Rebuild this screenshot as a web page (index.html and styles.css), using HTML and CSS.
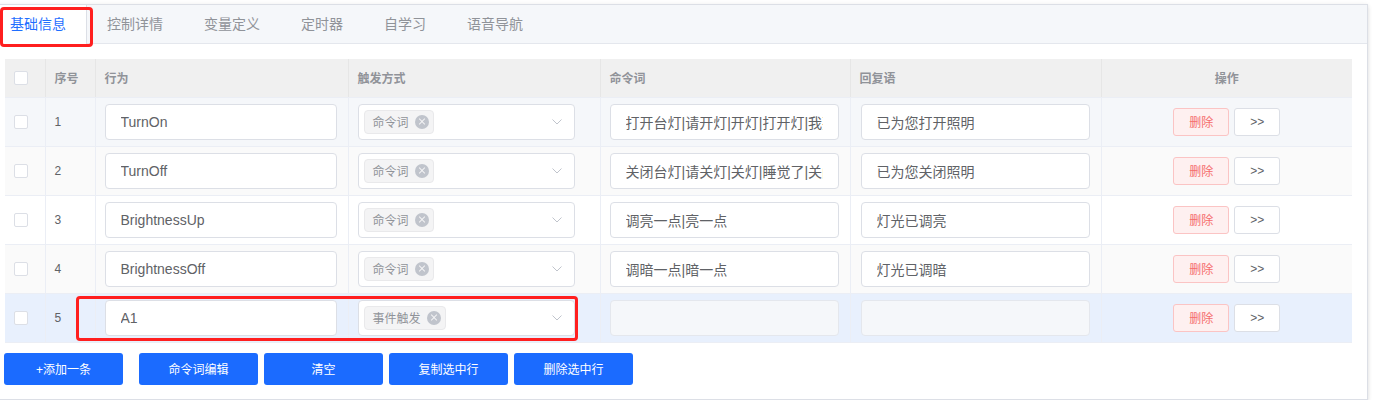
FILE: index.html
```html
<!DOCTYPE html>
<html lang="zh-CN">
<head>
    <meta charset="UTF-8">
    <meta name="viewport" content="width=device-width, initial-scale=1.0">
    <title>基础信息</title>
    <link rel="stylesheet" href="styles.css">
</head>
<body>
    <div class="card">
        <div class="tabs">
            <div class="tab active">基础信息</div>
            <div class="tab">控制详情</div>
            <div class="tab">变量定义</div>
            <div class="tab">定时器</div>
            <div class="tab">自学习</div>
            <div class="tab">语音导航</div>
        </div>

        <div class="pane">
            <div class="table-wrap">
                <table class="grid">
                    <colgroup>
                        <col style="width: 40px">
                        <col style="width: 50px">
                        <col style="width: 253px">
                        <col style="width: 252px">
                        <col style="width: 250px">
                        <col style="width: 251px">
                        <col style="width: 251px">
                    </colgroup>
                    <thead>
                        <tr>
                            <th><span class="check"></span></th>
                            <th>序号</th>
                            <th>行为</th>
                            <th>触发方式</th>
                            <th>命令词</th>
                            <th>回复语</th>
                            <th class="center">操作</th>
                        </tr>
                    </thead>
                    <tbody>
                        <tr class="row-hover">
                            <td><span class="check"></span></td>
                            <td class="num">1</td>
                            <td><input class="field w-action" value="TurnOn"></td>
                            <td>
                                <div class="select">
                                    <span class="tag">命令词<i class="tag-close"></i></span>
                                    <svg class="arrow" width="10" height="6" viewBox="0 0 10 6"><path d="M0.5 0.5 L5 5 L9.5 0.5" fill="none" stroke="#c0c4cc" stroke-width="1"/></svg>
                                </div>
                            </td>
                            <td><input class="field w-cmd" value="打开台灯|请开灯|开灯|打开灯|我要开灯"></td>
                            <td><input class="field w-reply" value="已为您打开照明"></td>
                            <td class="center">
                                <div class="ops"><button class="btn-del">删除</button><button class="btn-more">&gt;&gt;</button></div>
                            </td>
                        </tr>
                        <tr class="row-stripe">
                            <td><span class="check"></span></td>
                            <td class="num">2</td>
                            <td><input class="field w-action" value="TurnOff"></td>
                            <td>
                                <div class="select">
                                    <span class="tag">命令词<i class="tag-close"></i></span>
                                    <svg class="arrow" width="10" height="6" viewBox="0 0 10 6"><path d="M0.5 0.5 L5 5 L9.5 0.5" fill="none" stroke="#c0c4cc" stroke-width="1"/></svg>
                                </div>
                            </td>
                            <td><input class="field w-cmd" value="关闭台灯|请关灯|关灯|睡觉了|关闭灯"></td>
                            <td><input class="field w-reply" value="已为您关闭照明"></td>
                            <td class="center">
                                <div class="ops"><button class="btn-del">删除</button><button class="btn-more">&gt;&gt;</button></div>
                            </td>
                        </tr>
                        <tr>
                            <td><span class="check"></span></td>
                            <td class="num">3</td>
                            <td><input class="field w-action" value="BrightnessUp"></td>
                            <td>
                                <div class="select">
                                    <span class="tag">命令词<i class="tag-close"></i></span>
                                    <svg class="arrow" width="10" height="6" viewBox="0 0 10 6"><path d="M0.5 0.5 L5 5 L9.5 0.5" fill="none" stroke="#c0c4cc" stroke-width="1"/></svg>
                                </div>
                            </td>
                            <td><input class="field w-cmd" value="调亮一点|亮一点"></td>
                            <td><input class="field w-reply" value="灯光已调亮"></td>
                            <td class="center">
                                <div class="ops"><button class="btn-del">删除</button><button class="btn-more">&gt;&gt;</button></div>
                            </td>
                        </tr>
                        <tr class="row-stripe">
                            <td><span class="check"></span></td>
                            <td class="num">4</td>
                            <td><input class="field w-action" value="BrightnessOff"></td>
                            <td>
                                <div class="select">
                                    <span class="tag">命令词<i class="tag-close"></i></span>
                                    <svg class="arrow" width="10" height="6" viewBox="0 0 10 6"><path d="M0.5 0.5 L5 5 L9.5 0.5" fill="none" stroke="#c0c4cc" stroke-width="1"/></svg>
                                </div>
                            </td>
                            <td><input class="field w-cmd" value="调暗一点|暗一点"></td>
                            <td><input class="field w-reply" value="灯光已调暗"></td>
                            <td class="center">
                                <div class="ops"><button class="btn-del">删除</button><button class="btn-more">&gt;&gt;</button></div>
                            </td>
                        </tr>
                        <tr class="row-current">
                            <td><span class="check"></span></td>
                            <td class="num">5</td>
                            <td><input class="field w-action" value="A1"></td>
                            <td>
                                <div class="select">
                                    <span class="tag">事件触发<i class="tag-close"></i></span>
                                    <svg class="arrow" width="10" height="6" viewBox="0 0 10 6"><path d="M0.5 0.5 L5 5 L9.5 0.5" fill="none" stroke="#c0c4cc" stroke-width="1"/></svg>
                                </div>
                            </td>
                            <td><input class="field w-cmd" value="" disabled></td>
                            <td><input class="field w-reply" value="" disabled></td>
                            <td class="center">
                                <div class="ops"><button class="btn-del">删除</button><button class="btn-more">&gt;&gt;</button></div>
                            </td>
                        </tr>
                    </tbody>
                </table>
                <!-- annotation over row 5 -->
                <div class="mark mark-row"></div>
            </div>

            <div class="toolbar">
                <button class="btn-primary first">+添加一条</button>
                <button class="btn-primary">命令词编辑</button>
                <button class="btn-primary">清空</button>
                <button class="btn-primary">复制选中行</button>
                <button class="btn-primary">删除选中行</button>
            </div>
        </div>
    </div>

    <!-- annotation over the active tab -->
    <div class="mark mark-tab"></div>
</body>
</html>
```

FILE: styles.css
```css
/* General styles */
* {
    margin: 0;
    padding: 0;
    box-sizing: border-box;
}

body {
    font-family: "Liberation Sans", "Noto Sans CJK SC", sans-serif;
    background: #fff;
    color: #606266;
    padding-top: 4px;
    overflow: hidden;
}

/* Card with tabs */
.card {
    margin-left: -11px;
    width: 1379px;
    border: 1px solid #dcdfe6;
    background: #fff;
    box-shadow: 0 2px 4px 0 rgba(0, 0, 0, 0.12), 0 0 6px 0 rgba(0, 0, 0, 0.04);
}

.tabs {
    display: flex;
    height: 39px;
    background: #f5f7fa;
    border-bottom: 1px solid #e4e7ed;
}

.tab {
    height: 39px;
    line-height: 38px;
    padding: 0 20px;
    font-size: 14px;
    color: #909399;
    border-right: 1px solid transparent;
}

.tab.active {
    background: #fff;
    color: #1f6fff;
    border-right-color: #dcdfe6;
}

.pane {
    padding: 15px 15px 14px;
}

/* Table */
.table-wrap {
    position: relative;
}

.grid {
    width: 1347px;
    table-layout: fixed;
    border-collapse: collapse;
    font-size: 12px;
}

.grid th {
    height: 38px;
    padding: 0 0 0 9px;
    background: #f0f0f0;
    color: #909399;
    font-weight: bold;
    text-align: left;
    border-right: 1px solid #e6e6e6;
    border-bottom: 1px solid #ebeef5;
}

.grid td {
    height: 49px;
    padding: 0 0 0 9px;
    border-right: 1px solid #ebeef5;
    border-bottom: 1px solid #ebeef5;
}

.grid th:last-child,
.grid td:last-child {
    border-right: none;
}

.grid .center {
    text-align: center;
    padding-left: 0;
}

.grid .num {
    color: #606266;
}

.row-hover td {
    background: #f5f7fa;
}

.row-stripe td {
    background: #fafafa;
}

.row-current td {
    background: #e8f0fd;
}

.check {
    display: block;
    width: 14px;
    height: 14px;
    border: 1px solid #dcdfe6;
    border-radius: 2px;
    background: #fff;
}

/* Inputs */
.field {
    display: block;
    height: 36px;
    padding: 0 15px;
    border: 1px solid #dcdfe6;
    border-radius: 4px;
    background: #fff;
    font-family: "Liberation Sans", "Noto Sans CJK SC", sans-serif;
    font-size: 14px;
    color: #606266;
    outline: none;
}

.field:disabled {
    background: #f5f7fa;
    border-color: #e4e7ed;
}

.w-action {
    width: 232px;
}

.w-cmd {
    width: 229px;
}

.w-reply {
    width: 229px;
    margin-left: 1px;
}

.select {
    display: flex;
    align-items: center;
    justify-content: space-between;
    width: 217px;
    height: 36px;
    padding: 0 12px 0 5px;
    border: 1px solid #dcdfe6;
    border-radius: 4px;
    background: #fff;
}

.tag {
    display: flex;
    align-items: center;
    height: 24px;
    padding: 0 4px 0 8px;
    border: 1px solid #e9e9eb;
    border-radius: 4px;
    background: #f4f4f5;
    color: #909399;
    font-size: 12px;
}

.tag-close {
    position: relative;
    width: 14px;
    height: 14px;
    margin-left: 6px;
    border-radius: 50%;
    background: #c0c4cc;
}

.tag-close::before,
.tag-close::after {
    content: "";
    position: absolute;
    left: 3px;
    top: 6.5px;
    width: 8px;
    height: 1px;
    background: #f4f4f5;
    transform: rotate(45deg);
}

.tag-close::after {
    transform: rotate(-45deg);
}

.arrow {
    display: block;
}

/* Row buttons */
.ops {
    display: inline-flex;
    gap: 5px;
}

.btn-del,
.btn-more {
    height: 28px;
    padding: 0 15px;
    border-radius: 3px;
    font-family: "Liberation Sans", "Noto Sans CJK SC", sans-serif;
    font-size: 12px;
    cursor: pointer;
}

.btn-del {
    width: 56px;
    background: #fef0f0;
    border: 1px solid #fbc4c4;
    color: #f56c6c;
}

.btn-more {
    width: 46px;
    background: #fff;
    border: 1px solid #dcdfe6;
    color: #606266;
    padding: 0;
}

/* Bottom toolbar */
.toolbar {
    display: flex;
    gap: 6px;
    margin-top: 10px;
    margin-left: -1px;
}

.btn-primary {
    width: 119px;
    height: 32px;
    border: none;
    border-radius: 3px;
    background: #1b6bff;
    color: #fff;
    font-family: "Liberation Sans", "Noto Sans CJK SC", sans-serif;
    font-size: 12px;
    cursor: pointer;
}

.btn-primary.first {
    margin-right: 10px;
}

/* Red annotation boxes */
.mark {
    position: absolute;
    border: 3px solid #ff1f1f;
    border-radius: 4px;
    pointer-events: none;
}

.mark-tab {
    left: 0;
    top: 7px;
    width: 93px;
    height: 40px;
}

.mark-row {
    left: 71px;
    top: 237px;
    width: 502px;
    height: 45px;
}
```
